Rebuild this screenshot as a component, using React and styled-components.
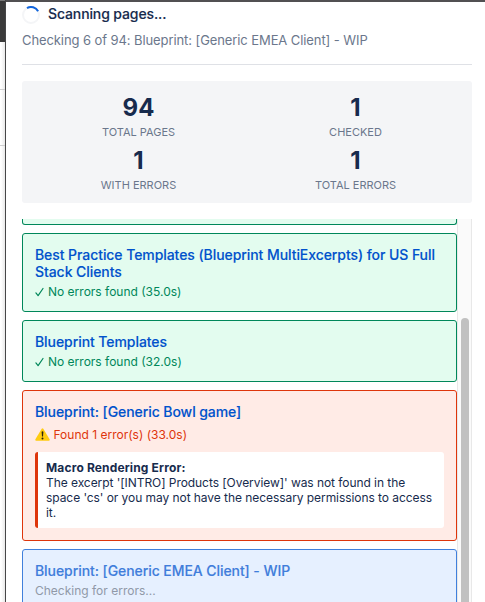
import React from 'react';
import styled, { createGlobalStyle, css } from 'styled-components';

const GlobalStyle = createGlobalStyle`
  * { box-sizing: border-box; }
  body {
    margin: 0;
    overflow: hidden;
    background: #fff;
    font-family: Inter, "Liberation Sans", sans-serif;
    color: #172b4d;
  }
`;

const Window = styled.div`
  display: grid;
  grid-template-columns: 6px 1fr;
  width: 485px;
  height: 602px;
  overflow: hidden;
`;

const Backdrop = styled.div`
  display: flex;
  flex-direction: column;
  border-right: 1px solid #464647;
  background: linear-gradient(to right, #fff 0, #fff 1px, #e9e9e9 5px);
`;

const BackdropBar = styled.div`
  height: 42px;
  background: #3a3a3a;
  border-top: 1px solid #767676;
`;

const BackdropRow = styled.div`
  height: ${({ $height }) => $height}px;
  border-bottom: 1px solid #cfcfd0;
`;

const Panel = styled.main`
  display: flex;
  flex-direction: column;
  min-width: 0;
  height: 602px;
  padding: 3px 13px 0 16px;
  border-top: 2px solid #515052;
  background: #fff;
`;

const Header = styled.header`
  height: 60px;
  border-bottom: 1px solid #dfe1e6;
`;

const HeaderRow = styled.div`
  display: flex;
  align-items: flex-start;
  gap: 8px;
  height: 19px;
`;

const Spinner = styled.svg`
  width: 18px;
  height: 18px;
  margin-top: 0.5px;
  flex: none;
`;

const Heading = styled.h1`
  margin: 0;
  font-size: 14px;
  font-weight: 500;
  line-height: 18px;
  letter-spacing: -0.12px;
  -webkit-text-stroke: 0.12px currentColor;
`;

const Progress = styled.p`
  margin: 8px 0 0;
  font-size: 13px;
  line-height: 16px;
  letter-spacing: -0.09px;
  color: #6b778c;
  white-space: nowrap;
`;

const Stats = styled.section`
  display: grid;
  grid-template-columns: 1fr 1fr;
  gap: 8px 16px;
  margin-top: 16px;
  padding: 12px 16px;
  height: 122px;
  flex: none;
  border-radius: 3px;
  background: #f4f5f7;
`;

const Stat = styled.div`
  text-align: center;
`;

const StatValue = styled.div`
  font-size: 24px;
  font-weight: 700;
  line-height: 30px;
`;

const StatLabel = styled.div`
  margin-top: 2px;
  padding-top: 1px;
  height: 13px;
  font-size: 11px;
  line-height: 13px;
  color: #6b778c;
`;

const Results = styled.section`
  display: grid;
  grid-template-columns: 435px 15px;
  height: 383px;
  margin-top: 16px;
  flex: none;
  overflow: hidden;
`;

const CardList = styled.div`
  display: flex;
  flex-direction: column;
  gap: 8px;
`;

const tones = {
  success: css`
    border-color: #00875a;
    background: #e3fcef;
  `,
  error: css`
    border-color: #de350b;
    background: #ffebe6;
  `,
  pending: css`
    border-color: #4080dc;
    background: #e6f0ff;
  `,
};

const Card = styled.article`
  flex: none;
  padding: 12px;
  border: 1px solid;
  border-radius: 3px;
  ${({ $tone }) => tones[$tone]}
`;

const CardTail = styled(Card)`
  height: 6px;
  padding: 0;
  border-top: 0;
  border-radius: 0 0 3px 3px;
`;

const CardTitle = styled.h2`
  margin: 0 0 4px;
  font-size: 14px;
  font-weight: 500;
  line-height: 17px;
  letter-spacing: -0.07px;
  -webkit-text-stroke: 0.12px currentColor;
  white-space: nowrap;
  color: ${({ $muted }) => ($muted ? '#407ddb' : '#0052cc')};
`;

const statusColors = { success: '#00875a', error: '#de350b', pending: '#9099a8' };

const Status = styled.div`
  display: flex;
  align-items: center;
  gap: ${({ $tone }) => ($tone === 'error' ? 3.5 : 4)}px;
  height: ${({ $tone }) => ($tone === 'error' ? 20 : 15)}px;
  font-size: 12px;
  line-height: 15px;
  white-space: nowrap;
  color: ${({ $tone }) => statusColors[$tone]};
`;

const CheckIcon = styled.svg`
  width: 9px;
  height: 10px;
`;

const WarningIcon = styled.svg`
  width: 15px;
  height: 13px;
`;

const ErrorDetail = styled.div`
  height: 76px;
  margin-top: 8px;
  padding: 8px;
  border-left: 3px solid #de350b;
  border-radius: 3px;
  background: #fff;
  font-size: 12px;
  line-height: 15px;
  letter-spacing: -0.06px;
  white-space: nowrap;
`;

const ErrorTitle = styled.strong`
  display: block;
  font-weight: 700;
  letter-spacing: 0.15px;
`;

const ScrollTrack = styled.div`
  padding: 99px 2px 0 3px;
  border: solid #e8e8e8;
  border-width: 0 1px;
  background: #fafafa;
`;

const ScrollThumb = styled.div`
  width: 8px;
  height: 320px;
  border-radius: 4px;
  background: #c1c1c1;
`;

const stats = [
  ['94', 'TOTAL PAGES'],
  ['1', 'CHECKED'],
  ['1', 'WITH ERRORS'],
  ['1', 'TOTAL ERRORS'],
];

function Check() {
  return (
    <CheckIcon viewBox="0 0 9 10" fill="none" stroke="currentColor" strokeWidth="1.2" strokeLinecap="round" strokeLinejoin="round">
      <path d="M.9 5.9 3.1 8.6 8 1.5" />
    </CheckIcon>
  );
}

function Warning() {
  return (
    <WarningIcon viewBox="0 0 15 13">
      <path d="M6.7.8Q7.5-.3 8.3.8L14.6 11.3Q15 12.7 13.8 12.7H1.2Q0 12.7.4 11.3Z" fill="#ffcc12" />
      <path d="M6.6 3.7Q7.5 3 8.4 3.7L8 8.6H7Z" fill="#28230d" />
      <circle cx="7.5" cy="10.5" r="1" fill="#28230d" />
    </WarningIcon>
  );
}

export default function App() {
  return (
    <>
      <GlobalStyle />
      <Window>
        <Backdrop>
          <BackdropBar />
          <BackdropRow $height={48} />
          <BackdropRow $height={56} />
        </Backdrop>
        <Panel>
          <Header>
            <HeaderRow>
              <Spinner viewBox="0 0 18 18" fill="none" strokeWidth="2">
                <circle cx="9" cy="9" r="8" stroke="#f4f5f7" />
                <path d="M5 2.1A8 8 0 0 1 16.1 5.3" stroke="#1265dc" />
              </Spinner>
              <Heading>Scanning pages...</Heading>
            </HeaderRow>
            <Progress>Checking 6 of 94: Blueprint: [Generic EMEA Client] - WIP</Progress>
          </Header>
          <Stats>
            {stats.map(([value, label]) => (
              <Stat key={label}>
                <StatValue>{value}</StatValue>
                <StatLabel>{label}</StatLabel>
              </Stat>
            ))}
          </Stats>
          <Results>
            <CardList>
              <CardTail $tone="success" />
              <Card $tone="success">
                <CardTitle>
                  Best Practice Templates (Blueprint MultiExcerpts) for US Full
                  <br />
                  Stack Clients
                </CardTitle>
                <Status $tone="success"><Check /><span>No errors found (35.0s)</span></Status>
              </Card>
              <Card $tone="success">
                <CardTitle>Blueprint Templates</CardTitle>
                <Status $tone="success"><Check /><span>No errors found (32.0s)</span></Status>
              </Card>
              <Card $tone="error">
                <CardTitle>Blueprint: [Generic Bowl game]</CardTitle>
                <Status $tone="error"><Warning /><span>Found 1 error(s) (33.0s)</span></Status>
                <ErrorDetail>
                  <ErrorTitle>Macro Rendering Error:</ErrorTitle>
                  The excerpt '[INTRO] Products [Overview]' was not found in the<br />
                  space 'cs' or you may not have the necessary permissions to access<br />
                  it.
                </ErrorDetail>
              </Card>
              <Card $tone="pending">
                <CardTitle $muted>Blueprint: [Generic EMEA Client] - WIP</CardTitle>
                <Status $tone="pending">Checking for errors...</Status>
              </Card>
            </CardList>
            <ScrollTrack><ScrollThumb /></ScrollTrack>
          </Results>
        </Panel>
      </Window>
    </>
  );
}
